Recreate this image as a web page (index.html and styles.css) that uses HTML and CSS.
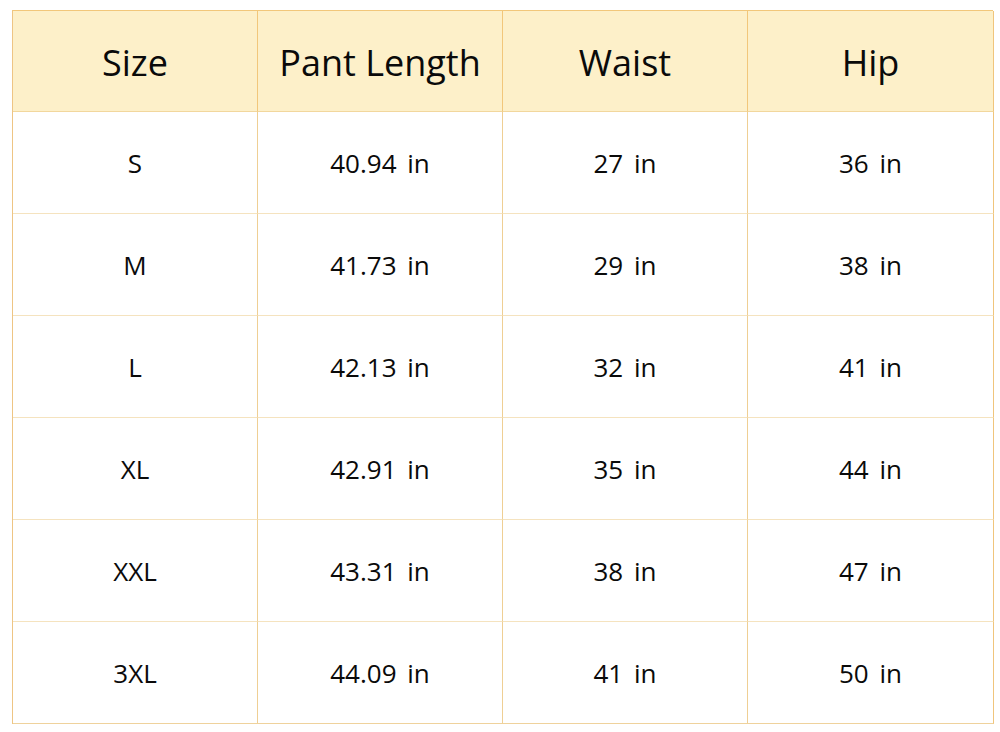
FILE: index.html
```html
<!DOCTYPE html>
<html>
<head>
<meta charset="utf-8">
<link rel="stylesheet" href="styles.css">
</head>
<body>
<div class="chart">
  <div class="cell head">Size</div>
  <div class="cell head">Pant Length</div>
  <div class="cell head">Waist</div>
  <div class="cell head">Hip</div>

  <div class="cell">S</div><div class="cell">40.94 in</div><div class="cell">27 in</div><div class="cell">36 in</div>
  <div class="cell">M</div><div class="cell">41.73 in</div><div class="cell">29 in</div><div class="cell">38 in</div>
  <div class="cell">L</div><div class="cell">42.13 in</div><div class="cell">32 in</div><div class="cell">41 in</div>
  <div class="cell">XL</div><div class="cell">42.91 in</div><div class="cell">35 in</div><div class="cell">44 in</div>
  <div class="cell">XXL</div><div class="cell">43.31 in</div><div class="cell">38 in</div><div class="cell">47 in</div>
  <div class="cell">3XL</div><div class="cell">44.09 in</div><div class="cell">41 in</div><div class="cell">50 in</div>
</div>
</body>
</html>
```
FILE: styles.css
```css
html, body {
  margin: 0;
  padding: 0;
  background: #ffffff;
}
body {
  padding: 10px 7px 0 12px;
  font-family: "Open Sans", "Noto Sans", sans-serif;
  color: #0a0a0a;
}
.chart {
  width: 981px;
  display: grid;
  grid-template-columns: 245px 245px 245px 246px;
  grid-template-rows: 101px repeat(6, 102px);
  border-top: 1px solid #f2c77a;
  border-left: 1px solid #eec584;
  box-sizing: border-box;
}
.cell {
  display: flex;
  align-items: center;
  justify-content: center;
  border-right: 1px solid #efcf94;
  border-bottom: 1px solid #f5e3bf;
  font-size: 26px;
  word-spacing: 4px;
  box-sizing: border-box;
}
.cell:nth-child(4n) {
  border-right-color: #f0c57c;
}
.cell:nth-last-child(-n+4) {
  border-bottom-color: #efd29c;
}
.head {
  background: #fdf0c9;
  font-size: 36px;
  font-weight: 500;
  word-spacing: 0;
  border-bottom-color: #f2d79d;
  border-right-color: #f2c77a;
  padding-top: 2px;
}
```
